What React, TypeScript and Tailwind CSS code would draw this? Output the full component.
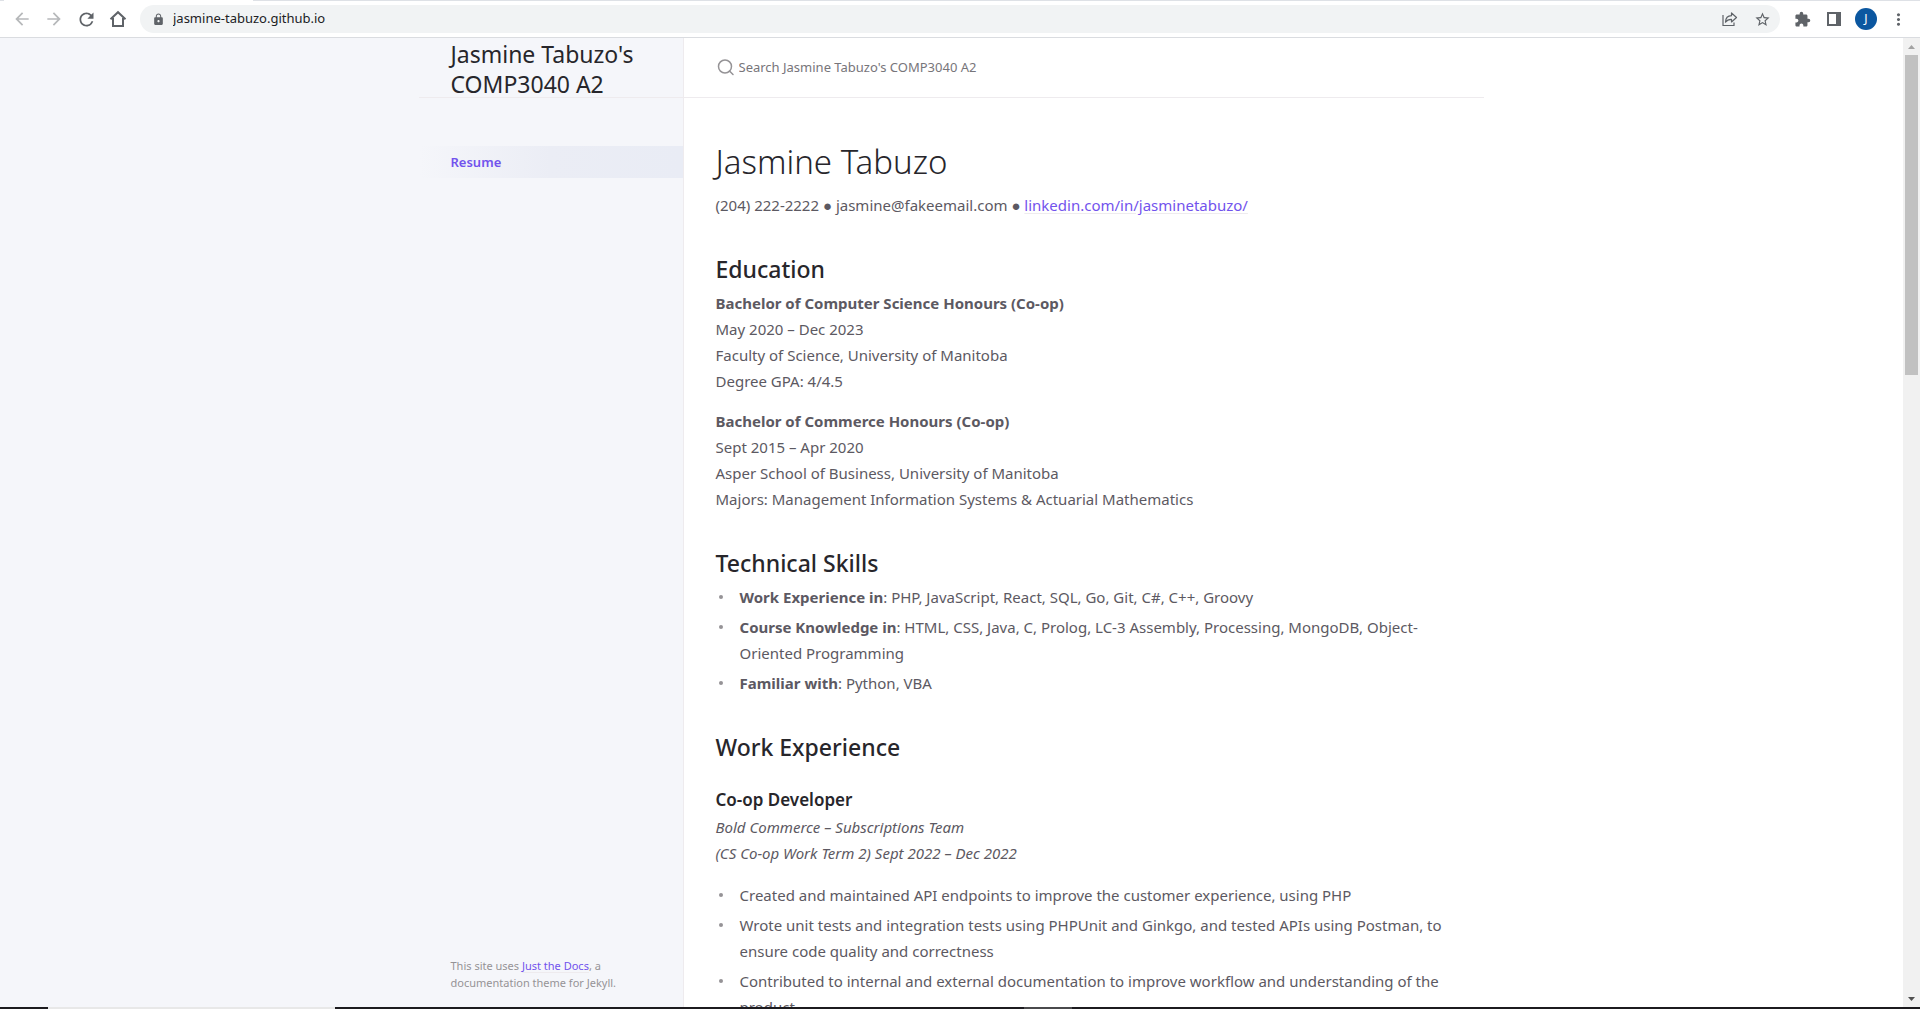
import type { ReactNode } from "react";
import { MdArrowBack, MdArrowForward, MdExtension, MdLock, MdMoreVert, MdRefresh, MdStarBorder } from "react-icons/md";

function ToolButton({ label, className, children }: { label: string; className?: string; children: ReactNode }) {
  return (
    <button type="button" aria-label={label} className={`flex size-8 shrink-0 items-center justify-center text-[#5f6368] ${className ?? ""}`}>
      {children}
    </button>
  );
}

function BrowserBar() {
  return (
    <header className="shrink-0 border-b border-[#dadce0] bg-white">
      <div className="flex h-px bg-[#dee1e6]">
        <div className="ml-1 w-[249px] bg-white" />
      </div>
      <div className="flex h-9 items-center pr-1.5 pl-1.5">
        <ToolButton label="Back" className="opacity-45"><MdArrowBack size={20} /></ToolButton>
        <ToolButton label="Forward" className="opacity-45"><MdArrowForward size={20} /></ToolButton>
        <ToolButton label="Reload"><MdRefresh size={21} /></ToolButton>
        <ToolButton label="Home">
          <svg width="18" height="18" viewBox="0 0 18 18" fill="none" stroke="currentColor" strokeWidth="2">
            <path d="M1.5 9.2 9 2.2l7.500 7M4 8v8h10V8" />
          </svg>
        </ToolButton>
        <div className="ml-1.5 flex h-7 flex-1 items-center rounded-full bg-[#f1f3f4] pr-0.5 pl-3 text-[#5f6368]">
          <MdLock size={13} />
          <input
            type="text"
            aria-label="Address"
            defaultValue="jasmine-tabuzo.github.io"
            className="ml-2 min-w-0 flex-1 bg-transparent text-[13px] text-[#202124] outline-none"
          />
          <ToolButton label="Share">
            <svg width="16" height="16" viewBox="0 0 16 16" fill="none" stroke="currentColor" strokeWidth="1.200">
              <path d="M1 4v10.500h11V11.500" />
              <path d="M9.500 2v2.700C5.500 4.800 3.600 7.500 3.500 11.200 5 9 7 8.200 9.500 8.300V11l5-4.500z" strokeLinejoin="round" />
            </svg>
          </ToolButton>
          <ToolButton label="Bookmark"><MdStarBorder size={17} /></ToolButton>
        </div>
        <ToolButton label="Extensions" className="ml-1.5"><MdExtension size={17} /></ToolButton>
        <ToolButton label="Side panel">
          <svg width="14" height="14" viewBox="0 0 14 14">
            <path fill="currentColor" fillRule="evenodd" d="M0 0h14v14H0zM2 2v10h7V2z" />
          </svg>
        </ToolButton>
        <ToolButton label="Profile">
          <span className="flex size-[22px] items-center justify-center rounded-full bg-[#0b57a0] text-xs text-white">J</span>
        </ToolButton>
        <ToolButton label="Menu"><MdMoreVert size={19} /></ToolButton>
      </div>
    </header>
  );
}

function Sidebar() {
  return (
    <aside className="flex w-[calc(50%-268px)] shrink-0 justify-end border-r border-[#eeebee] bg-[#f5f6fa]">
      <div className="flex w-[264px] flex-col">
        <div className="flex h-15 items-center border-b border-[#eeebee] pl-8">
          <a href="#home" className="pt-0.5 text-[23px] leading-[30px] text-[#27262b]">
            Jasmine Tabuzo's
            <br />
            COMP3040 A2
          </a>
        </div>
        <nav className="mt-12 flex-1">
          <a
            href="#resume"
            className="block h-8 bg-linear-to-r from-transparent via-[#ebedf5] via-50% to-[#e9ecf5] pl-8 text-[13px] leading-8 font-semibold text-[#7253ed]"
          >
            Resume
          </a>
        </nav>
        <footer className="pb-4 pl-8 text-[11px] leading-[17px] text-[#959396]">
          This site uses <a href="#docs" className="text-[#7253ed] underline decoration-[#eeebee] underline-offset-2">Just the Docs</a>, a
          <br />
          documentation theme for Jekyll.
        </footer>
      </div>
    </aside>
  );
}

function Bullets({ items }: { items: ReactNode[] }) {
  return (
    <ul className="flex flex-col gap-1">
      {items.map((item, i) => (
        <li key={i} className="flex">
          <span aria-hidden="true" className="flex h-[26px] w-6 shrink-0 items-center pl-[3px]">
            <span className="size-1 rounded-full bg-[#959396]" />
          </span>
          <span>{item}</span>
        </li>
      ))}
    </ul>
  );
}

function Resume() {
  return (
    <article className="px-8 pt-[42px] text-[15px] leading-[26px] text-[#5c5962]">
      <h1 className="text-[33px] leading-[44px] font-light text-[#27262b]">Jasmine Tabuzo</h1>
      <p className="mt-2">
        (204) 222-2222 ● jasmine@fakeemail.com ●{" "}
        <a href="#linkedin" className="text-[#7253ed] underline decoration-[#eeebee] underline-offset-2">linkedin.com/in/jasminetabuzo/</a>
      </p>

      <h2 className="mt-9 text-[23px] leading-[30px] font-medium text-[#27262b]">Education</h2>
      <p className="mt-1.5">
        <strong>Bachelor of Computer Science Honours (Co-op)</strong>
        <br />
        May 2020 – Dec 2023
        <br />
        Faculty of Science, University of Manitoba
        <br />
        Degree GPA: 4/4.5
      </p>
      <p className="mt-3.5">
        <strong>Bachelor of Commerce Honours (Co-op)</strong>
        <br />
        Sept 2015 – Apr 2020
        <br />
        Asper School of Business, University of Manitoba
        <br />
        Majors: Management Information Systems &amp; Actuarial Mathematics
      </p>

      <h2 className="mt-9 mb-1.5 text-[23px] leading-[30px] font-medium text-[#27262b]">Technical Skills</h2>
      <Bullets
        items={[
          <><strong>Work Experience in</strong>: PHP, JavaScript, React, SQL, Go, Git, C#, C++, Groovy</>,
          <><strong>Course Knowledge in</strong>: HTML, CSS, Java, C, Prolog, LC-3 Assembly, Processing, MongoDB, Object-Oriented Programming</>,
          <><strong>Familiar with</strong>: Python, VBA</>,
        ]}
      />

      <h2 className="mt-9 text-[23px] leading-[30px] font-medium text-[#27262b]">Work Experience</h2>
      <h3 className="mt-6.5 text-[17px] leading-6 font-semibold text-[#27262b]">Co-op Developer</h3>
      <p className="mt-0.5 mb-4 italic">
        Bold Commerce – Subscriptions Team
        <br />
        (CS Co-op Work Term 2) Sept 2022 – Dec 2022
      </p>
      <Bullets
        items={[
          "Created and maintained API endpoints to improve the customer experience, using PHP",
          "Wrote unit tests and integration tests using PHPUnit and Ginkgo, and tested APIs using Postman, to ensure code quality and correctness",
          "Contributed to internal and external documentation to improve workflow and understanding of the product",
        ]}
      />
    </article>
  );
}

function ScrollTrack() {
  return (
    <div aria-hidden="true" className="flex w-[17px] shrink-0 flex-col items-center bg-[#f1f1f1]">
      <div className="flex h-[17px] items-center">
        <svg width="7" height="4" viewBox="0 0 7 4" fill="#a3a3a3"><path d="M3.500 0 7 4H0z" /></svg>
      </div>
      <div className="h-[33%] w-[13px] bg-[#c1c1c1]" />
      <div className="mt-auto flex h-[17px] items-center">
        <svg width="7" height="4" viewBox="0 0 7 4" fill="#505050"><path d="M0 0h7L3.500 4z" /></svg>
      </div>
    </div>
  );
}

export default function App() {
  return (
    <div className="flex h-screen flex-col overflow-hidden bg-white font-['Noto_Sans','Open_Sans',sans-serif]">
      <BrowserBar />
      <div className="flex min-h-0 flex-1">
        <div className="flex min-w-0 flex-1">
          <Sidebar />
          <div className="min-w-0 flex-1 overflow-hidden">
            <main className="max-w-[800px]">
              <label className="flex h-15 items-center border-b border-[#eeebee] pl-8">
                <svg width="19" height="19" viewBox="0 0 19 19" fill="none" stroke="#959396" strokeWidth="1.500">
                  <circle cx="9" cy="8.500" r="6.500" />
                  <path d="m13.500 13 3.500 3.500" strokeLinecap="round" />
                </svg>
                <input
                  type="search"
                  aria-label="Search"
                  placeholder="Search Jasmine Tabuzo's COMP3040 A2"
                  className="ml-1 min-w-0 flex-1 bg-transparent text-[13px] outline-none placeholder:text-[#77757a]"
                />
              </label>
              <Resume />
            </main>
          </div>
        </div>
        <ScrollTrack />
      </div>
      <div aria-hidden="true" className="flex h-0.5 shrink-0 bg-[#1c1b1f]">
        <div className="ml-12 w-[287px] bg-[#e8e8e8]" />
        <div className="ml-[689px] w-12 bg-[#4a4a4c]" />
      </div>
    </div>
  );
}
